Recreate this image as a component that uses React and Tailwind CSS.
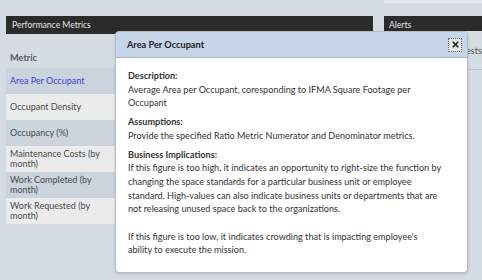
import { X } from "lucide-react";

const metrics = [
  { name: "Area Per Occupant", active: true },
  { name: "Occupant Density" },
  { name: "Occupancy (%)" },
  { name: "Maintenance Costs (by month)" },
  { name: "Work Completed (by month)" },
  { name: "Work Requested (by month)" },
];

function MetricRow({ name, active, index }) {
  const light = index % 2 === 1;
  return (
    <div
      className={`flex items-center h-[26px] pl-[4px] pr-2 text-[9px] leading-[10px] ${
        light ? "bg-[#ebebeb]" : "bg-[#cbd3dd]"
      } ${active ? "text-[#3a3fe0]" : "text-[#4a4a4a]"}`}
    >
      <span className="w-[92px]">{name}</span>
    </div>
  );
}

export default function App() {
  return (
    <div
      className="relative w-[482px] h-[280px] overflow-hidden bg-[#d5dbe3]"
      style={{ fontFamily: "Lato, 'Open Sans', sans-serif" }}
    >
      <div className="flex pt-[16px] pl-[6px]">
        <div className="w-[367px]">
          <div className="h-[18px] bg-[#2b2b2b] text-[#e4e4e4] text-[8.6px] leading-[18px] pl-[6px]">
            Performance Metrics
          </div>
          <div className="h-[34px] flex items-center pt-[14px] pl-[4px] text-[9.2px] font-bold text-[#5a5a5a]">
            Metric
          </div>
          <div className="flex flex-col">
            {metrics.map((m, i) => (
              <MetricRow key={m.name} index={i} {...m} />
            ))}
          </div>
        </div>

        <div className="flex-1 ml-[11px] -mt-[16px]">
          <div className="h-[3px] bg-[#e6e9ee]" />
          <div className="h-[13px]" />
          <div className="h-[15px] bg-[#2b2b2b] text-[#e4e4e4] text-[8.6px] leading-[18px] pl-[5px]">
            Alerts
          </div>
          <div className="h-[39px] flex items-start justify-end pt-[13px] text-[9.3px] text-[#555] border-b border-[#b9c1cc]">
            Requests
          </div>
        </div>
      </div>

      {/* dialog */}
      <div className="absolute left-[115px] top-[31px] w-[353px] h-[242px] bg-white rounded-[4px] border border-[#b4bcc7] shadow-[0_1px_3px_rgba(0,0,0,0.15)] overflow-hidden">
        <div className="h-[26px] flex items-center justify-between pl-[11px] pr-[5px] bg-[#c6d5ea] border-b border-[#a9b7c9]">
          <span className="text-[9.2px] font-bold text-[#222]">Area Per Occupant</span>
          <button className="w-[14px] h-[14px] flex items-center justify-center border border-dotted border-[#666] bg-[#e4e4e4]">
            <X size={9} strokeWidth={4.5} className="text-[#222]" />
          </button>
        </div>
        <div className="pl-[12px] pr-[18px] pt-[11px] text-[9.1px] leading-[13.7px] text-[#333]">
          <div className="font-bold">Description:</div>
          <p>Average Area per Occupant, coresponding to IFMA Square Footage per Occupant</p>
          <div className="font-bold mt-[5px]">Assumptions:</div>
          <p>Provide the specified Ratio Metric Numerator and Denominator metrics.</p>
          <div className="font-bold mt-[5px]">Business Implications:</div>
          <p>
            If this figure is too high, it indicates an opportunity to right-size the function by
            changing the space standards for a particular business unit or employee standard.
            High-values can also indicate business units or departments that are not releasing
            unused space back to the organizations.
          </p>
          <p className="mt-[13.7px]">
            If this figure is too low, it indicates crowding that is impacting employee's
            <br />
            ability to execute the mission.
          </p>
        </div>
      </div>
    </div>
  );
}
